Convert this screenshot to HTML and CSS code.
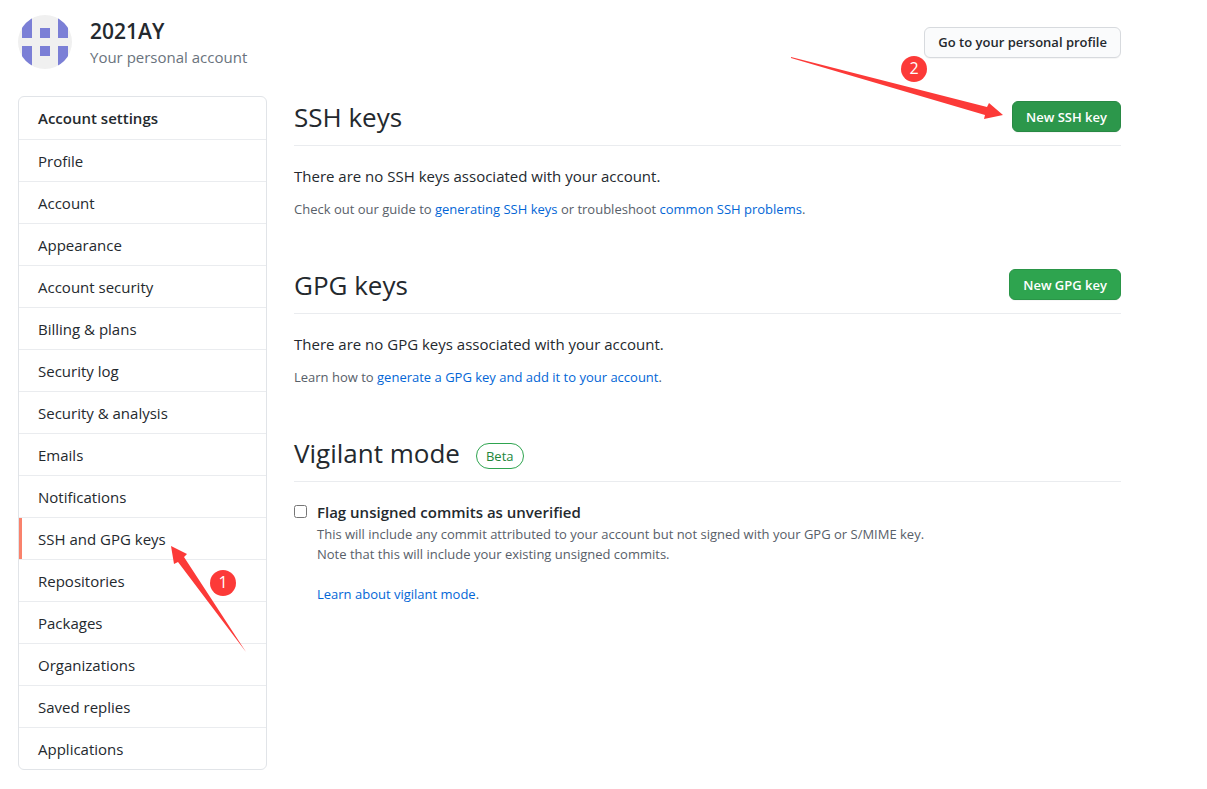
FILE: index.html
```
<!DOCTYPE html>
<html lang="en">
<head>
    <meta charset="UTF-8">
    <meta name="viewport" content="width=device-width, initial-scale=1.0">
    <title>SSH and GPG keys</title>
    <link rel="stylesheet" href="styles.css">
</head>
<body>

<div class="page">
    <header class="account">
        <svg class="avatar" viewBox="0 0 54 54" aria-hidden="true">
            <clipPath id="round"><circle cx="27" cy="27" r="27"/></clipPath>
            <g clip-path="url(#round)">
                <rect width="54" height="54" fill="#f0f0f0"/>
                <path fill="#7b7fd6" d="M4 0h10v23H4zM40 0h10v23H40zM4 31h10v23H4zM40 31h10v23H40zM22 13h10v10H22zM22 31h10v10H22z"/>
            </g>
        </svg>
        <div class="account-text">
            <h1>2021AY</h1>
            <p>Your personal account</p>
        </div>
        <button type="button" class="btn">Go to your personal profile</button>
    </header>

    <div class="columns">
        <nav class="menu" aria-label="Account settings">
            <h2>Account settings</h2>
            <a href="#">Profile</a>
            <a href="#">Account</a>
            <a href="#">Appearance</a>
            <a href="#">Account security</a>
            <a href="#">Billing &amp; plans</a>
            <a href="#">Security log</a>
            <a href="#">Security &amp; analysis</a>
            <a href="#">Emails</a>
            <a href="#">Notifications</a>
            <a href="#" class="selected">SSH and GPG keys
                <svg class="arrow arrow-one" viewBox="0 0 75 106" aria-hidden="true"><path d="M0 0L16 8L13 11L75 106L7 16L3 18z"/></svg>
                <span class="step step-one">1</span>
            </a>
            <a href="#">Repositories</a>
            <a href="#">Packages</a>
            <a href="#">Organizations</a>
            <a href="#">Saved replies</a>
            <a href="#">Applications</a>
        </nav>

        <main class="content">
            <section>
                <div class="subhead">
                    <h2>SSH keys</h2>
                    <button type="button" class="btn btn-primary btn-hover">New SSH key</button>
                    <svg class="arrow arrow-two" viewBox="0 0 212 62" aria-hidden="true"><path d="M0 0L0 1L194 58L193 62L212 58L198 46L196 50z"/></svg>
                    <span class="step step-two">2</span>
                </div>
                <p class="lead">There are no SSH keys associated with your account.</p>
                <p class="note">Check out our guide to <a href="#">generating SSH keys</a> or troubleshoot <a href="#">common SSH problems</a>.</p>
            </section>

            <section>
                <div class="subhead">
                    <h2>GPG keys</h2>
                    <button type="button" class="btn btn-primary">New GPG key</button>
                </div>
                <p class="lead">There are no GPG keys associated with your account.</p>
                <p class="note">Learn how to <a href="#">generate a GPG key and add it to your account</a>.</p>
            </section>

            <section>
                <div class="subhead">
                    <h2>Vigilant mode</h2>
                    <span class="label">Beta</span>
                </div>
                <div class="check">
                    <input type="checkbox" id="vigilant">
                    <div>
                        <label for="vigilant">Flag unsigned commits as unverified</label>
                        <p class="note">This will include any commit attributed to your account but not signed with your GPG or S/MIME key.<br>Note that this will include your existing unsigned commits.</p>
                        <p class="note learn"><a href="#">Learn about vigilant mode</a>.</p>
                    </div>
                </div>
            </section>
        </main>
    </div>
</div>

</body>
</html>
```
FILE: styles.css
```
* {
    box-sizing: border-box;
}
body {
    margin: 0;
    background: #fff;
    color: #24292e;
    font-family: "Open Sans", "Noto Sans", sans-serif;
    font-size: 15px;
    line-height: 24px;
}
h1, h2, p {
    margin: 0;
}
a {
    color: #0366d6;
    text-decoration: none;
}
.page {
    padding: 15px 86px 18px 18px;
}
.account {
    display: flex;
    align-items: center;
    margin-bottom: 27px;
}
.avatar {
    width: 54px;
    height: 54px;
    margin-right: 18px;
}
.account-text {
    flex: 1;
    padding-top: 2px;
}
.account h1 {
    font-size: 21px;
    font-weight: 600;
    line-height: 28px;
}
.account p {
    color: #6a737d;
}
.btn {
    height: 31px;
    padding: 0 13px;
    border: 1px solid #d7dade;
    border-radius: 6px;
    background: #fafbfc;
    box-shadow: 0 1px 0 rgba(27, 31, 35, 0.04);
    color: #24292e;
    font-family: inherit;
    font-size: 13px;
    font-weight: 600;
    cursor: pointer;
}
.btn-primary {
    background: #2ea44f;
    border-color: #2a9548;
    color: #fff;
}
.btn-hover {
    background: #2c974b;
    border-color: #288944;
}
.columns {
    display: flex;
    align-items: flex-start;
    gap: 27px;
}
.menu {
    flex: 0 0 249px;
    border: 1px solid #e1e4e8;
    border-radius: 6px;
}
.menu h2 {
    padding: 9px 19px;
    font-size: 15px;
    font-weight: 600;
}
.menu a {
    display: block;
    position: relative;
    padding: 9px 19px 8px;
    border-top: 1px solid #eaecef;
    color: #24292e;
}
.menu .selected::before {
    content: "";
    position: absolute;
    top: 0;
    bottom: 0;
    left: 0;
    width: 3px;
    background: #f9826c;
}
.content {
    flex: 1;
    min-width: 0;
    padding-top: 4px;
}
.subhead {
    display: flex;
    position: relative;
    align-items: center;
    height: 46px;
    padding-bottom: 12px;
    margin-bottom: 18px;
    border-bottom: 1px solid #eaecef;
}
.subhead h2 {
    font-size: 26px;
    font-weight: 400;
    line-height: 32px;
}
.subhead .btn {
    margin-left: auto;
}
.lead {
    margin-bottom: 11px;
}
.note {
    color: #586069;
    font-size: 13px;
    line-height: 20px;
}
section {
    margin-bottom: 49px;
}
.label {
    margin: 6px 0 0 16px;
    padding: 0 9px;
    border: 1px solid #2ea44f;
    border-radius: 13px;
    color: #22863a;
    font-size: 13px;
}
.check {
    display: flex;
    gap: 10px;
}
.check input {
    width: 13px;
    height: 13px;
    margin: 5px 0 0;
}
.check label {
    display: block;
    font-weight: 600;
}
.learn {
    margin-top: 20px;
}

/* tutorial marks */
.arrow, .step {
    position: absolute;
    pointer-events: none;
    z-index: 1;
}
.arrow {
    fill: #fc3a38;
}
.step {
    width: 26px;
    height: 26px;
    border-radius: 50%;
    background: #fc3a38;
    color: #fff;
    font-size: 16px;
    line-height: 25px;
    text-align: center;
}
.arrow-one {
    top: 28px;
    left: 152px;
    width: 75px;
    height: 106px;
}
.step-one {
    top: 52px;
    left: 191px;
}
.arrow-two {
    top: -43px;
    right: 118px;
    width: 212px;
    height: 62px;
}
.step-two {
    top: -44px;
    right: 194px;
}
```
